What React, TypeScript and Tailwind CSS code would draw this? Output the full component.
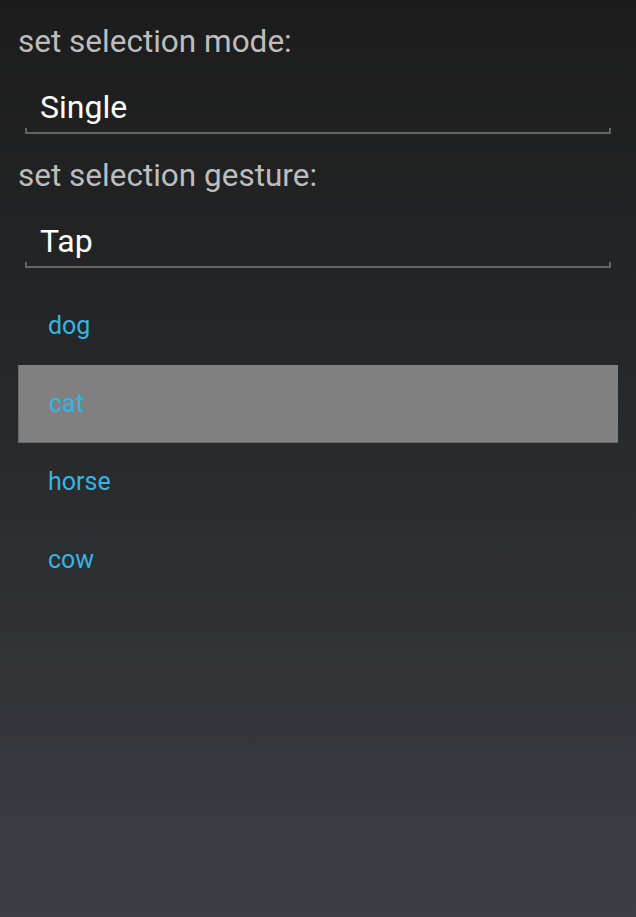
import React from "react";

const ANIMALS = ["dog", "cat", "horse", "cow"];

function Spinner({ value }: { value: string }) {
  return (
    <div className="mx-[7px] mt-[12px] flex flex-col">
      <div className="h-[54px] pl-[15px] pt-[12px] flex items-center text-[32px] text-white leading-none">
        {value}
      </div>
      <div className="h-[6px] border-x-2 border-b-2 border-[#646464]" />
    </div>
  );
}

export default function App() {
  const selected = 1;
  return (
    <div
      className="h-[917px] w-full overflow-hidden bg-gradient-to-b from-[#1c1c1c] via-[#282a2c] to-[#3c3f44] px-[18px]"
      style={{ fontFamily: "Roboto, 'Noto Sans', sans-serif" }}
    >
      <div className="mt-[22px] h-[40px] leading-[40px] text-[31.5px] text-[#bdbdbd]">
        set selection mode:
      </div>
      <Spinner value="Single" />
      <div className="mt-[22px] h-[40px] leading-[40px] text-[31.5px] text-[#bdbdbd]">
        set selection gesture:
      </div>
      <Spinner value="Tap" />
      <div className="mt-[19px] flex flex-col">
        {ANIMALS.map((a, i) => (
          <div
            key={a}
            className={
              i === selected
                ? "h-[78px] flex items-center pl-[30px] text-[25px] text-[#33b5e5] bg-[#808080] border-l border-b border-[#6a6a6a]"
                : "h-[78px] flex items-center pl-[30px] text-[25px] text-[#33b5e5]"
            }
          >
            {a}
          </div>
        ))}
      </div>
    </div>
  );
}
